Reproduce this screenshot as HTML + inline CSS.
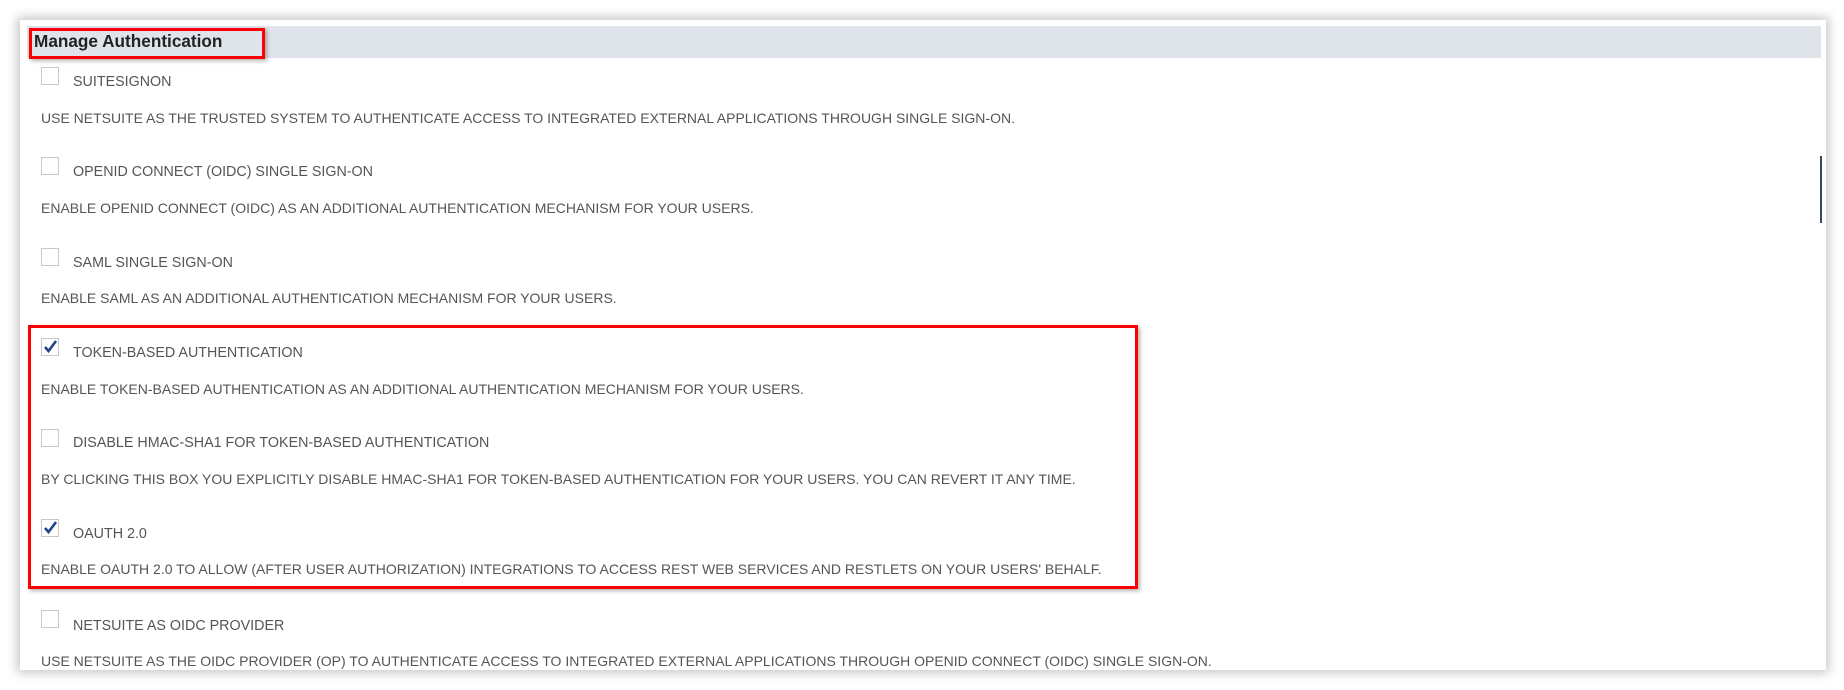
<!DOCTYPE html>
<html><head><meta charset="utf-8"><style>
body{margin:0;width:1844px;height:690px;background:#fff;position:relative;overflow:hidden;font-family:"Liberation Sans",sans-serif}
.panel{position:absolute;left:20px;top:20px;width:1806px;height:650px;background:#fff;box-shadow:0 0 10px 3px rgba(0,0,0,.22)}
.hdr{position:absolute;left:27px;top:26px;width:1794px;height:32px;background:#dfe3ea}
.ht{position:absolute;left:34px;top:31px;font-size:17.2px;font-weight:bold;color:#222}
.red{position:absolute;border:3px solid #f00;box-sizing:border-box;box-shadow:2px 2px 4px rgba(0,0,0,.3)}
.cb{position:absolute;left:41px;width:18px;height:18px;border:1px solid #c8c8c8;box-sizing:border-box;background:#fff}
.lb,.ds{position:absolute;left:73px;font-size:14.3px;color:#555;white-space:nowrap;line-height:16px}
.ds{left:41px;font-size:14px}
.sb{position:absolute;left:1820px;top:156px;width:2px;height:67px;background:#3a4a5a}
</style></head><body>
<div class="panel"></div>
<div class="hdr"></div>
<div class="ht">Manage Authentication</div>
<div class="red" style="left:29px;top:28px;width:236px;height:31px"></div>
<div class="sb"></div>

<div class="cb" style="top:67px"></div><div class="lb" style="top:74px">SUITESIGNON</div>
<div class="ds" style="top:110px">USE NETSUITE AS THE TRUSTED SYSTEM TO AUTHENTICATE ACCESS TO INTEGRATED EXTERNAL APPLICATIONS THROUGH SINGLE SIGN-ON.</div>

<div class="cb" style="top:157px"></div><div class="lb" style="top:164px">OPENID CONNECT (OIDC) SINGLE SIGN-ON</div>
<div class="ds" style="top:200px">ENABLE OPENID CONNECT (OIDC) AS AN ADDITIONAL AUTHENTICATION MECHANISM FOR YOUR USERS.</div>

<div class="cb" style="top:248px"></div><div class="lb" style="top:255px">SAML SINGLE SIGN-ON</div>
<div class="ds" style="top:290px">ENABLE SAML AS AN ADDITIONAL AUTHENTICATION MECHANISM FOR YOUR USERS.</div>

<div class="red" style="left:28px;top:325px;width:1110px;height:264px"></div>

<div class="cb" style="top:338px"><svg width="18" height="18" style="position:absolute;left:-1px;top:-1px"><path d="M4 9 L7.5 13 L15 3" fill="none" stroke="#23438a" stroke-width="2.6"/></svg></div><div class="lb" style="top:345px">TOKEN-BASED AUTHENTICATION</div>
<div class="ds" style="top:381px">ENABLE TOKEN-BASED AUTHENTICATION AS AN ADDITIONAL AUTHENTICATION MECHANISM FOR YOUR USERS.</div>

<div class="cb" style="top:429px"></div><div class="lb" style="top:435px">DISABLE HMAC-SHA1 FOR TOKEN-BASED AUTHENTICATION</div>
<div class="ds" style="top:471px">BY CLICKING THIS BOX YOU EXPLICITLY DISABLE HMAC-SHA1 FOR TOKEN-BASED AUTHENTICATION FOR YOUR USERS. YOU CAN REVERT IT ANY TIME.</div>

<div class="cb" style="top:519px"><svg width="18" height="18" style="position:absolute;left:-1px;top:-1px"><path d="M4 9 L7.5 13 L15 3" fill="none" stroke="#23438a" stroke-width="2.6"/></svg></div><div class="lb" style="top:526px">OAUTH 2.0</div>
<div class="ds" style="top:561px">ENABLE OAUTH 2.0 TO ALLOW (AFTER USER AUTHORIZATION) INTEGRATIONS TO ACCESS REST WEB SERVICES AND RESTLETS ON YOUR USERS' BEHALF.</div>

<div class="cb" style="top:610px"></div><div class="lb" style="top:618px">NETSUITE AS OIDC PROVIDER</div>
<div class="ds" style="top:653px">USE NETSUITE AS THE OIDC PROVIDER (OP) TO AUTHENTICATE ACCESS TO INTEGRATED EXTERNAL APPLICATIONS THROUGH OPENID CONNECT (OIDC) SINGLE SIGN-ON.</div>
</body></html>
